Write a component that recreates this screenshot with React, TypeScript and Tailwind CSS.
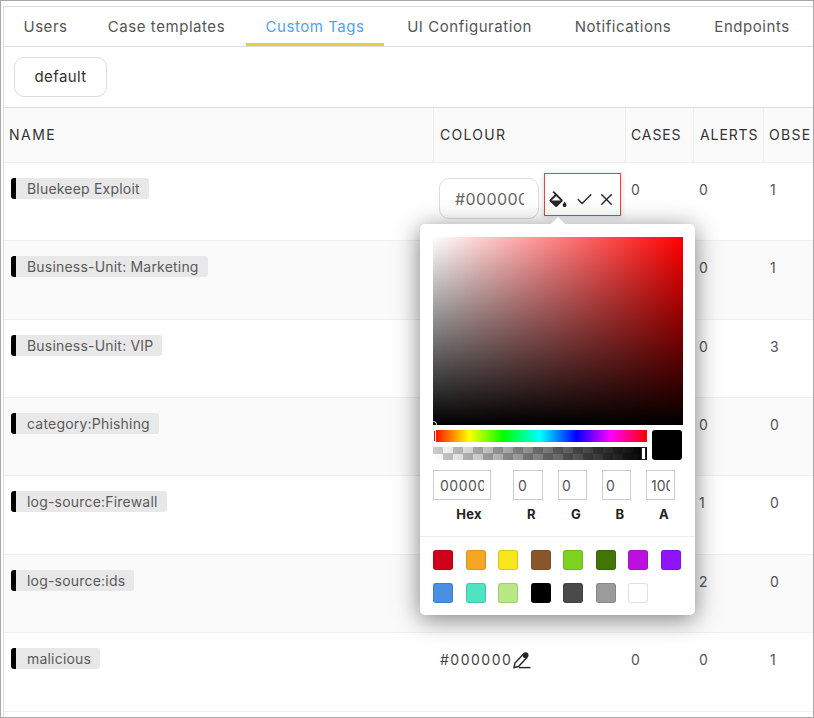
import { Check, X } from "lucide-react";

const FONT = "font-['Inter','Liberation_Sans',sans-serif]";

const TABS = [
  { name: "Users", width: "w-[83px]" },
  { name: "Case templates", width: "w-[159px]" },
  { name: "Custom Tags", width: "w-[138px]", active: true },
  { name: "UI Configuration", width: "w-[171px]" },
  { name: "Notifications", width: "w-[136px]" },
  { name: "Endpoints", width: "w-[122px]" },
];

const TAGS = [
  { name: "Bluekeep Exploit", cases: 0, alerts: 0, obs: 1, height: "h-[78px]" },
  { name: "Business-Unit: Marketing", cases: 0, alerts: 0, obs: 1, height: "h-[79px]" },
  { name: "Business-Unit: VIP", cases: 0, alerts: 0, obs: 3, height: "h-[78px]" },
  { name: "category:Phishing", cases: 0, alerts: 0, obs: 0, height: "h-[78px]" },
  { name: "log-source:Firewall", cases: 0, alerts: 1, obs: 0, height: "h-[79px]" },
  { name: "log-source:ids", cases: 0, alerts: 2, obs: 0, height: "h-[78px]" },
  { name: "malicious", cases: 0, alerts: 0, obs: 1, height: "h-[79px]" },
];

const SWATCHES = [
  "#d0021b", "#f5a623", "#f8e71c", "#8b572a", "#7ed321", "#417505", "#bd10e0", "#9013fe",
  "#4a90e2", "#50e3c2", "#b8e986", "#000000", "#4a4a4a", "#9b9b9b", "#ffffff",
];

const BucketIcon = () => (
  <svg viewBox="2.5 0 19 17.5" className="h-[16.5px] w-[18px] shrink-0 text-[#262626]" fill="currentColor">
    <path d="M16.56 8.94 7.62 0 6.21 1.41l2.38 2.38-5.15 5.15a1.49 1.49 0 0 0 0 2.12l5.5 5.5c.29.29.68.44 1.06.44s.77-.15 1.06-.44l5.5-5.5c.59-.58.59-1.53 0-2.12zM5.21 10 10 5.21 14.79 10H5.21zM19 11.5s-2 2.17-2 3.5c0 1.1.9 2 2 2s2-.9 2-2c0-1.33-2-3.5-2-3.5z" />
  </svg>
);

const PencilIcon = () => (
  <svg viewBox="0 0 18 18" className="ml-[1px] size-[18px] shrink-0 text-[#262626]" fill="none" stroke="currentColor" strokeWidth="1.4">
    <path d="M1 16.5 2 12 10 3.5 13.5 7 5.5 15.5Z" />
    <circle cx="12.6" cy="4.2" r="2.9" fill="currentColor" stroke="none" />
    <path d="M6 16.6h11.5" />
  </svg>
);

const ColorPicker = () => (
  <div className="absolute left-[419px] top-[223px] z-10 h-[391px] w-[275px] rounded-[5px] bg-white shadow-[0_4px_24px_rgba(0,0,0,0.5)]">
    {/* caret */}
    <div className="absolute -top-[7px] left-[131px] size-0 border-x-[7px] border-b-[7px] border-x-transparent border-b-white" />
    <div className="flex flex-col px-[13px] pt-[13px]">
      <div className="relative h-[188px] w-[250px] bg-[linear-gradient(to_top,#000,rgba(0,0,0,0)),linear-gradient(to_right,#fff,#ff0000)]">
        <div className="absolute -bottom-[3px] -left-[3px] size-[7px] rounded-full border border-white" />
      </div>
      <div className="mt-[5px] flex gap-[5px]">
        <div className="flex w-[215px] flex-col gap-[5px]">
          <div className="relative h-[12px] bg-[linear-gradient(to_right,#f00_0%,#ff0_17%,#0f0_33%,#0ff_50%,#00f_67%,#f0f_83%,#f00_100%)]">
            <div className="absolute inset-y-0 left-0 w-[3px] border border-white bg-[#ff0000]" />
          </div>
          <div className="relative h-[13px] bg-[linear-gradient(to_right,rgba(0,0,0,0),#000),repeating-conic-gradient(#fff_0_25%,#ccc_0_50%)] bg-size-[100%_100%,20px_13px]">
            <div className="absolute inset-y-0 right-[1px] w-[5px] border border-[#222] bg-white" />
          </div>
        </div>
        <div className="h-[30px] w-[30px] rounded-[3px] bg-black" />
      </div>
      <div className="mt-[10px] flex text-[14px] text-[#555]">
        <div className="flex h-[30px] w-[58px] items-center overflow-hidden border border-[#ccc] px-[6px]"><span className="overflow-hidden tracking-[0.5px]">000000</span></div>
        <div className="ml-[22px] flex h-[30px] w-[30px] items-center border border-[#ccc] pl-[4px]">0</div>
        <div className="ml-[15px] flex h-[30px] w-[29px] items-center border border-[#ccc] pl-[3px]">0</div>
        <div className="ml-[15px] flex h-[30px] w-[29px] items-center border border-[#ccc] pl-[3px]">0</div>
        <div className="ml-[15px] flex h-[30px] w-[29px] items-center overflow-hidden border border-[#ccc] px-[4px]"><span className="overflow-hidden">100</span></div>
      </div>
      <div className="mt-[6px] flex h-[18px] items-center text-[13px] font-bold tracking-[0.3px] text-[#222]">
        <span className="w-[58px] pl-[14px] text-center">Hex</span>
        <span className="ml-[22px] w-[30px] pl-[7px] text-center">R</span>
        <span className="ml-[15px] w-[29px] pl-[7px] text-center">G</span>
        <span className="ml-[15px] w-[29px] pl-[7px] text-center">B</span>
        <span className="ml-[15px] w-[29px] pl-[7px] text-center">A</span>
      </div>
    </div>
    <div className="mt-[12px] border-t border-[#eeeeee] pl-[13px] pr-[12px] pt-[13px]">
      <div className="grid grid-cols-[repeat(8,20px)] gap-x-[12.5px] gap-y-[13px]">
        {SWATCHES.map((color) => (
          <div
            key={color}
            className="size-[20px] rounded-[3px] shadow-[inset_0_0_0_1px_rgba(0,0,0,0.12)]"
            style={{ backgroundColor: color }}
          />
        ))}
      </div>
    </div>
  </div>
);

const TagRow = ({ tag, index }: { tag: (typeof TAGS)[number]; index: number }) => (
  <div className={`flex border-b border-[#efefef] ${tag.height} ${index % 2 === 1 ? "bg-[#fafafa]" : "bg-white"}`}>
    <div className="flex w-[429px] items-start pl-[7px] pt-[15px]">
      <span className="flex h-[21px] items-center rounded-[3px] border-l-[5px] border-l-black bg-[#e8e8e8] pb-[1px] pl-[11px] pr-[9px] text-[14px] tracking-[0.2px] text-[#5a5a5a]">
        {tag.name}
      </span>
    </div>
    <div className="w-[192px] pl-[6px]">
      {index === 0 && (
        <div className="flex pt-[15px]">
          <div className="flex h-[41px] w-[100px] items-center overflow-hidden rounded-[10px] border border-[#dcdcdc] pl-[15px] pr-[14px] text-[16px] tracking-[0.4px] text-[#666]">
            <span className="overflow-hidden whitespace-nowrap">#000000</span>
          </div>
          <div className="-mt-[5px] ml-[5px] flex h-[43px] w-[77px] items-center border border-[#f04040] pl-[4px] pt-[9px] shadow-[0_1px_6px_rgba(0,0,0,0.18)]">
            <BucketIcon />
            <Check className="ml-[8px] size-[19px] shrink-0 text-[#262626]" strokeWidth={1.75} />
            <X className="ml-[3px] size-[19px] shrink-0 text-[#262626]" strokeWidth={1.75} />
          </div>
        </div>
      )}
      {index === 6 && (
        <div className="flex items-center pl-[1px] pt-[16px] text-[14px] tracking-[1.5px] text-[#444]">
          #000000
          <PencilIcon />
        </div>
      )}
    </div>
    <div className="w-[68px] pl-[6px] pt-[16px] text-[14px] text-[#555]">{tag.cases}</div>
    <div className="w-[70px] pl-[6px] pt-[16px] text-[14px] text-[#555]">{tag.alerts}</div>
    <div className="pl-[7px] pt-[16px] text-[14px] text-[#555]">{tag.obs}</div>
  </div>
);

export default function App() {
  return (
    <div className={`relative h-[718px] w-[814px] overflow-hidden border border-[#a8a8a8] bg-white ${FONT}`}>
      <div className="ml-[2px] h-full border-l border-[#dcdcdc]">
        <div className="mt-[5px] flex h-[41px] border-y border-[#dcdcdc] text-[15px] tracking-[0.55px] text-[#555]">
          {TABS.map((tab) => (
            <div
              key={tab.name}
              className={`flex items-center justify-center whitespace-nowrap ${tab.width} ${
                tab.active ? "border-b-[3px] border-[#e8cb47] pt-[5px] text-[#4da3f5]" : "pt-[2px]"
              }`}
            >
              {tab.name}
            </div>
          ))}
        </div>
        <div className="h-[60px] pl-[10px] pt-[10px]">
          <div className="flex h-[40px] w-[93px] items-center justify-center rounded-[10px] border border-[#dcdcdc] text-[15px] tracking-[0.4px] text-[#333]">
            default
          </div>
        </div>
        <div className="flex h-[56px] items-center border-y border-b-[#efefef] border-t-[#dcdcdc] bg-[#fafafa] text-[14px] tracking-[0.9px] text-[#333]">
          <div className="flex h-full w-[429px] items-center pb-[1px] pl-[5px] tracking-[1.5px]">NAME</div>
          <div className="flex h-full w-[192px] items-center border-l border-[#eeeeee] pb-[1px] pl-[6px] tracking-[1.3px]">COLOUR</div>
          <div className="flex h-full w-[68px] items-center border-l border-[#eeeeee] pb-[1px] pl-[5px]">CASES</div>
          <div className="flex h-full w-[70px] items-center border-l border-[#eeeeee] pb-[1px] pl-[6px]">ALERTS</div>
          <div className="flex h-full flex-1 items-center overflow-hidden border-l border-[#eeeeee] pb-[1px] pl-[5px] tracking-[1.3px]">OBSE</div>
        </div>
        {TAGS.map((tag, index) => (
          <TagRow key={tag.name} tag={tag} index={index} />
        ))}
      </div>
      <ColorPicker />
    </div>
  );
}
